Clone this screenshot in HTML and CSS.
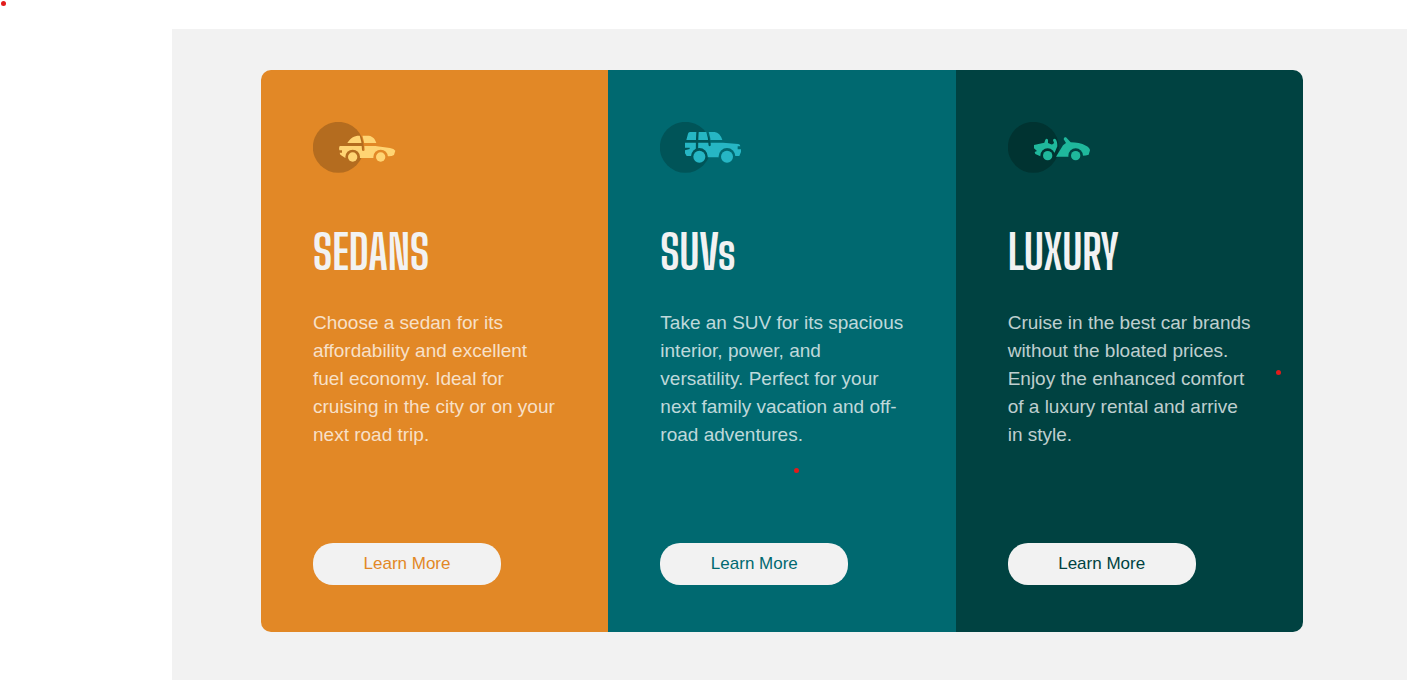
FILE: index.html
```html
<!DOCTYPE html>
<html lang="en">
<head>
<meta charset="utf-8">
<meta name="viewport" content="width=device-width, initial-scale=1">
<title>Car categories</title>
<link rel="stylesheet" href="styles.css">
</head>
<body>
<main class="page">
  <div class="cards">
    <section class="card sedan">
      <svg class="icon" viewBox="39 36 252 153" aria-hidden="true">
        <mask id="sedan-cut">
          <rect x="39" y="36" width="252" height="153" fill="#fff"/>
          <g fill="#000"><circle cx="158" cy="141" r="22"/><circle cx="242" cy="141" r="22"/></g>
          <path d="M183 76q7 20 7 43" fill="none" stroke="#000" stroke-width="8" stroke-linecap="round"/>
        </mask>
        <circle cx="115" cy="112" r="76.500" fill="#b46c1f"/>
        <g fill="#ffd473">
          <g mask="url(#sedan-cut)">
            <path d="M142 99C152 84 161 77 178 77H206C220 79 225 88 229 99Z"/>
            <path d="M119 108H226L270 114Q282 116 286 122L282 135Q276 139 266 139H261V144H136L121 134L119 128H126V121H118Q115 116 119 108Z"/>
          </g>
          <circle cx="158" cy="141" r="14"/><circle cx="242" cy="141" r="14"/>
        </g>
      </svg>
      <h2>SEDANS</h2>
      <p>Choose a sedan for its affordability and excellent fuel economy. Ideal for cruising in the city or on your next road trip.</p>
      <a class="button" href="#sedans">Learn More</a>
    </section>
    <section class="card suv">
      <svg class="icon" viewBox="33 36 252 153" aria-hidden="true">
        <mask id="suv-cut">
          <rect x="33" y="36" width="252" height="153" fill="#fff"/>
          <g fill="#000"><circle cx="151" cy="139" r="25"/><circle cx="234" cy="139" r="25"/></g>
          <path d="M146 62Q144 82 144 116M175 64Q182 84 182 105" fill="none" stroke="#000" stroke-width="7" stroke-linecap="round"/>
        </mask>
        <circle cx="109" cy="112" r="76.500" fill="#005458"/>
        <g fill="#26b6c4">
          <g mask="url(#suv-cut)">
            <path d="M112 90L117 71Q118 66 123 66H197Q213 68 220 90Z"/>
            <path d="M108 98H222L268 102Q274 103 274 109H266V118H276V126L271 138H257V142H126V138H113L108 130V121L122 117V113H108Z"/>
          </g>
          <circle cx="151" cy="140" r="18"/><circle cx="234" cy="140" r="18"/>
        </g>
      </svg>
      <h2>SUVs</h2>
      <p>Take an SUV for its spacious interior, power, and versatility. Perfect for your next family vacation and off-road adventures.</p>
      <a class="button" href="#suvs">Learn More</a>
    </section>
    <section class="card luxury">
      <svg class="icon" viewBox="39 36 252 153" aria-hidden="true">
        <mask id="luxury-cut">
          <rect x="39" y="36" width="252" height="153" fill="#fff"/>
          <g fill="#000"><circle cx="158" cy="137" r="22"/><circle cx="242" cy="137" r="22"/></g>
        </mask>
        <circle cx="115" cy="112" r="76.500" fill="#003331"/>
        <g fill="#1fb89c">
          <g mask="url(#luxury-cut)">
            <path d="M117 105L148 98L151 89Q155 84 159 89V99L168 103Q175 104 177 98L174 91Q176 84 182 88Q187 94 187 109L180 125L176 132L136 139L121 132L119 126L126 123L117 115Z"/>
            <path d="M183 140L204 106L213 99L206 88Q206 80 213 82L227 97Q252 97 273 107Q285 113 285 121L281 134Q273 137 262 137V140Z"/>
          </g>
          <circle cx="158" cy="137" r="14"/><circle cx="242" cy="137" r="14"/>
        </g>
      </svg>
      <h2>LUXURY</h2>
      <p>Cruise in the best car brands without the bloated prices. Enjoy the enhanced comfort of a luxury rental and arrive in style.</p>
      <a class="button" href="#luxury">Learn More</a>
      <span class="dot dot-side"></span>
    </section>
    <span class="dot dot-center"></span>
  </div>
</main>
<span class="dot dot-corner"></span>
</body>
</html>
```
FILE: styles.css
```css
* { box-sizing: border-box; }
body {
  margin: 0;
  min-height: 100vh;
  display: flex;
  background: #fff;
  font-family: "Liberation Sans", Arial, sans-serif;
}
.page {
  flex: 1;
  margin: 29px 0 0 172px;
  padding: 41px 104px 48px 89px;
  background: #f2f2f2;
}
.cards {
  position: relative;
  display: grid;
  grid-template-columns: repeat(3, 1fr);
}
.card {
  position: relative;
  display: flex;
  flex-direction: column;
  align-items: flex-start;
  padding: 52px 52px 47px;
}
.sedan { background: #e28826; color: #e28826; border-radius: 10px 0 0 10px; }
.suv { background: #006970; color: #006970; }
.luxury { background: #004241; color: #004241; border-radius: 0 10px 10px 0; }
.icon { display: block; width: 84px; height: 51px; }
h2 {
  margin: 51px 0 29px;
  color: #f2f2f2;
  font-family: "Big Shoulders Display", "Liberation Sans Narrow", "Liberation Sans", sans-serif;
  font-size: 47px;
  font-weight: 700;
  line-height: 56px;
}
p {
  margin: 0 0 94px;
  color: rgba(255, 255, 255, 0.75);
  font-size: 19px;
  line-height: 28px;
}
.button {
  margin-top: auto;
  width: 188px;
  border-radius: 20px;
  background: #f2f2f2;
  color: inherit;
  font-size: 17px;
  line-height: 42px;
  text-align: center;
  text-decoration: none;
}
.dot {
  position: absolute;
  width: 5px;
  height: 5px;
  border-radius: 50%;
  background: #e21b1b;
}
.dot-corner { top: 1px; left: 1px; }
.dot-side { top: 300px; right: 22px; }
.dot-center { top: 398px; left: 533px; }
```
